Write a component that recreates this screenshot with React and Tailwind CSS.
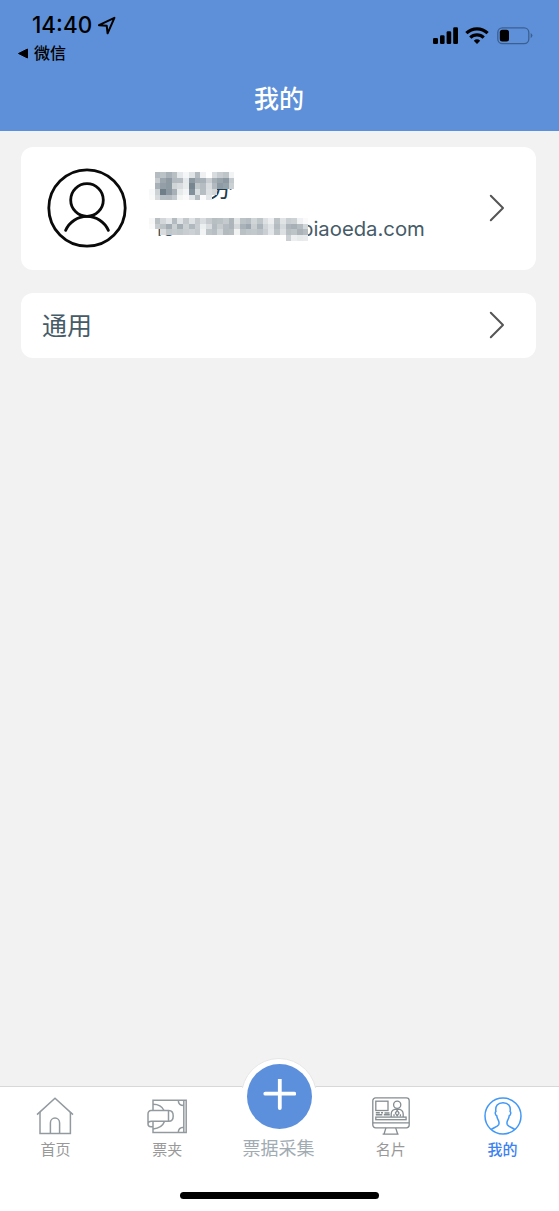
const NAME_MOSAIC = [
    ["", "#b4bcc1", "#bbc3c7", "#a8b1b7", "#b9c0c4", "#e5e8ea", "#f5f6f7", "#e0e4e6", "#b3bbc0", "#eef0f1", "", "#d8dcdf", "#c6ccd0", "#bec5c9", "#f1f3f4"],
    ["", "#c6ccd0", "#9ca6ad", "#8e99a1", "#b3bbc1", "#b5bdc2", "#e6e9eb", "#8d99a1", "#a4adb4", "#a8b1b7", "#c8ced2", "#a7b0b6", "#98a3aa", "#8d99a2", "#c3cacd"],
    ["", "#a8b1b8", "#939ea6", "#8d9aa2", "#cfd4d7", "#d8dcdf", "#e8ebec", "#76858f", "#c0c7cb", "#b5bdc2", "#d9dddf", "#b2bac0", "#8f9ba4", "#96a2a9", "#cbd0d3"],
    ["#f7f8f9", "#cdd2d5", "#6f7f89", "#8b98a1", "#a6b0b6", "#e7eaeb", "#f3f4f5", "#81909a", "#d9dee0", "#b6bec3", "#dce0e2", "#d2d7da", "", "", ""],
    ["#fafafa", "#d7dbde", "#b6bfc4", "#b5bdc2", "#c4cacf", "#f4f5f5", "#fafafa", "#e4e7e9", "#b5bdc2", "#fbfbfb", "#e3e6e8", "", "", "", ""],
];

const MAIL_MOSAIC = [
    ["#f7f7f7", "#b9c0c4", "#d3d7da", "#e3e6e8", "#b5bcc1", "#e0e3e5", "#c2c8cb", "#dfe2e4", "#c4cacd", "#d9dddf", "#c5cbce", "#b8bfc3", "#bbc2c6", "#c4cacd", "#aeb6bb", "#e2e5e6", "#bcc3c7", "#b6bec3", "#d0d5d7", "#bfc6ca", "#dee1e3", "#eceeef", "#bcc3c7", "#e0e4e5", "#c8ced1", "#cdd2d5", "#eff1f2", "#fafafa"],
    ["#fafafa", "#c6cccf", "#bcc3c7", "#a4adb3", "#cbd0d3", "#a5aeb4", "#cbd0d3", "#b1b9be", "#c7cdd0", "#ecefef", "#d9dddf", "#b4bcc1", "#c6cbce", "#b4bcc1", "#adb5ba", "#d4d8da", "#a9b2b8", "#9da7af", "#c9ced1", "#abb4ba", "#d0d5d7", "#e0e3e5", "#b4bcc1", "#d4d9db", "#aeb6bb", "#a7b0b6", "#b4bcc1", "#d3d8da"],
    ["", "", "#d8dcdf", "#c0c7ca", "#c5cbce", "#c1c8cc", "#c7cdd0", "#cbd1d4", "#c4cacd", "#f2f3f4", "#bec5c9", "#b8bfc4", "#d2d7d9", "#b3bbbf", "#b6bec2", "#f1f3f3", "#b9c1c5", "#c0c7cb", "#c2c9cc", "#bcc3c8", "#c9cfd2", "#e3e6e8", "#bcc4c8", "#dce0e2", "#b7bfc3", "#bdc4c8", "#abb3b9", "#b5bdc2"],
    ["", "", "", "", "", "", "", "", "", "", "", "", "", "", "", "", "", "", "", "", "", "", "", "", "#c9cfd2", "#eceeef", "#e7eaeb", "#e9ebec"],
];

function Mosaic({ rows }) {
    return (
        <div>
            {rows.map((row, y) => (
                <div key={y} className="flex h-[5.7px]">
                    {row.map((color, x) => (
                        <span key={x} className="h-full w-[5.7px] shrink-0" style={{ backgroundColor: color || undefined }} />
                    ))}
                </div>
            ))}
        </div>
    );
}

function LocationIcon() {
    return (
        <svg width="20" height="20" viewBox="0 0 20 20" fill="none" stroke="#000" strokeWidth="2" strokeLinejoin="round">
            <path d="M2 10.2 17.4 2.8 10.6 18.3 9.7 10.7Z" />
        </svg>
    );
}

function SignalIcon() {
    return (
        <svg width="26" height="18" viewBox="0 0 26 18">
            <rect x="0" y="11" width="5" height="6" rx="1.3" />
            <rect x="7" y="8.2" width="4.6" height="8.8" rx="1.3" />
            <rect x="13.6" y="4.3" width="4.6" height="12.7" rx="1.3" />
            <rect x="20.2" y="0.3" width="4.8" height="16.7" rx="1.3" />
        </svg>
    );
}

function WifiIcon() {
    return (
        <svg width="24" height="18" viewBox="0 0 24 18" fill="none" stroke="#000" strokeWidth="3.2">
            <path d="M1.4 6.2A15.2 15.2 0 0 1 22.6 6.2" />
            <path d="M5.3 10.6A9.6 9.6 0 0 1 18.7 10.6" />
            <path d="M8.8 13.7A5 5 0 0 1 15.2 13.7L12 17Z" fill="#000" stroke="none" />
        </svg>
    );
}

function BatteryIcon() {
    return (
        <svg width="37" height="18" viewBox="0 0 37 18">
            <rect x="0.8" y="0.8" width="31" height="15.8" rx="4.6" fill="none" stroke="#3c5f91" strokeWidth="1.3" />
            <rect x="2.8" y="2.8" width="9.2" height="11.8" rx="2.5" />
            <path d="M33.7 5.9Q37.2 8.6 33.7 11.3Z" fill="#3c5f91" />
        </svg>
    );
}

function Chevron() {
    return (
        <svg width="16" height="28" viewBox="0 0 16 28" fill="none" stroke="#555" strokeWidth="2" strokeLinecap="round" strokeLinejoin="round">
            <path d="M1.8 1.8 14 14 1.8 26.2" />
        </svg>
    );
}

function Avatar() {
    return (
        <svg width="80" height="80" viewBox="0 0 80 80" fill="none" stroke="#0a0a0a" strokeWidth="2.8" strokeLinecap="round">
            <circle cx="40" cy="40" r="38.2" />
            <circle cx="40" cy="32" r="16.3" />
            <path d="M18.6 62.4A23.4 23.4 0 0 1 61.4 62.4" />
        </svg>
    );
}

function HomeIcon() {
    return (
        <svg width="38" height="38" viewBox="0 0 38 38" fill="none" stroke="#939a9e" strokeWidth="1.5">
            <path d="M1 17.6 19 1.3 37 17.6" />
            <path d="M4 15v21.4h30.4V15" />
            <path d="M14.4 36.4V26a4.6 4.9 0 0 1 9.2 0v10.4" />
        </svg>
    );
}

function WalletIcon() {
    return (
        <svg width="40" height="38" viewBox="0 0 40 38" fill="none" stroke="#939a9e" strokeWidth="1.5">
            <path d="M6 13.3V3.3h33.2v32.2H6V24.2" />
            <path d="M36.8 3.3v32.2M31.3 3.3c0 3.4 2.2 5.3 5.5 5.3M31.3 35.5c0-3.4 2.2-5.3 5.5-5.3" />
            <path d="M6 7.2c5 0 9.4 2.6 11 6.3M17.6 24.2c-1.6 4.4-6 7.2-11.6 7.7" />
            <path d="M1 27V17c0-2.2 1.2-3.4 3-3.4h17.8c3 0 4.4 1.9 4.4 5.3s-1.4 5.3-4.4 5.3H4.5C2.4 24.2 1 25 1 27s1.2 2.7 2.9 2.7H6" />
            <path d="M21.5 13.6v10.6" />
        </svg>
    );
}

function CardIcon() {
    return (
        <svg width="38" height="38" viewBox="0 0 38 38" fill="none" stroke="#858c90" strokeWidth="1.3">
            <rect x="0.8" y="0.9" width="36.4" height="30" rx="2.8" />
            <path d="M0.8 25.9h36.4M13.9 30.9 12 37.2M23.7 30.9 25.7 37.2M10.6 37.2h16" />
            <rect x="3.8" y="4.2" width="12.2" height="9.3" />
            <circle cx="25.2" cy="7.8" r="3.6" />
            <path d="M19.2 20.1v-3c0-3.3 2.4-5 6-5s6 1.7 6 5v3M22 19.5v-2.2M28.4 19.5v-2.2M25.2 18.8l-1.8-2.7 1.8-2.6 1.8 2.6z" />
            <rect x="3.8" y="20.1" width="30.3" height="2.6" />
            <path d="M3.8 15.7h4M9 15.7h2M12.5 16.1h5M3.8 17.8h6.5M11.8 17.8h6" strokeWidth="1.5" />
        </svg>
    );
}

function MineIcon() {
    return (
        <svg width="38" height="38" viewBox="0 0 38 38" fill="none" stroke="#4298f7" strokeWidth="1.5">
            <circle cx="19" cy="19" r="18" />
            <path d="M7 32.8c1.8-2.2 6.6-2.8 7.7-5.2.8-1.9.1-3.8-.8-5.3-.8-1.3-1-2.3-1.2-3.6-1.4-.4-2-3.6-.8-4.2-.9-5.6 1.9-8.7 7.1-8.7s8 3.1 7.1 8.7c1.2.6.6 3.8-.8 4.2-.2 1.3-.4 2.3-1.2 3.6-.9 1.5-1.6 3.4-.8 5.3 1.1 2.4 5.9 3 7.7 5.2" />
        </svg>
    );
}

function Tab({ icon, label, active }) {
    return (
        <div className={`flex flex-1 flex-col items-center pt-[9.5px] ${active ? "font-medium text-[#3c82f0]" : "text-[#999]"}`}>
            {icon}
            <span className="mt-[7px] text-[15px] leading-4">{label}</span>
        </div>
    );
}

export default function App() {
    return (
        <div className="flex h-[1211px] w-[559px] flex-col overflow-hidden bg-[#f2f2f2] font-['Inter','Noto_Sans_CJK_SC',sans-serif]">
            {/* HEADER */}
            <header className="flex h-[131px] shrink-0 flex-col bg-[#5d90d9]">
                <div className="flex h-[70px] justify-between pr-[25px] pl-[17px] text-black">
                    <div className="pt-[13px]">
                        <div className="flex items-center pl-[15px]">
                            <span className="text-[22.5px] leading-6 font-medium">14:40</span>
                            <span className="ml-[5px]"><LocationIcon /></span>
                        </div>
                        <div className="mt-[6px] flex items-center gap-[5px] text-base leading-5 font-medium">
                            <svg width="12" height="11" viewBox="0 0 12 11"><path d="M1.5 5.5 10.5 1v9z" stroke="#000" strokeLinejoin="round" /></svg>
                            <span>微信</span>
                        </div>
                    </div>
                    <div className="flex items-start pt-[27px]">
                        <SignalIcon />
                        <span className="ml-[6px]"><WifiIcon /></span>
                        <span className="ml-2"><BatteryIcon /></span>
                    </div>
                </div>
                <h1 className="pt-[13px] pr-[1px] text-center text-[25px] leading-8 font-medium text-white">我的</h1>
            </header>

            {/* CONTENT */}
            <main className="flex flex-1 flex-col gap-[23px] pt-[15.5px] pr-[23px] pl-[21px]">
                <section className="flex h-[123px] items-center rounded-xl bg-white pr-[31px] pl-[26px]">
                    <Avatar />
                    <div className="ml-[22px] flex-1 self-stretch pt-[25.5px]">
                        <div className="relative h-[46px] pl-[59px] text-[25px] leading-8 text-[#233c4c]">
                            <span className="block [clip-path:inset(17px_0_0_0)]">芬</span>
                            <div className="absolute top-0 left-0"><Mosaic rows={NAME_MOSAIC} /></div>
                        </div>
                        <div className="relative flex h-6 pl-[5px] text-[20.3px] leading-[21px] text-[#465b68]">
                            <span className="w-[147px] [clip-path:inset(8px_0_0_0)]">16</span>
                            <span>piaoeda.com</span>
                            <div className="absolute top-0 left-0"><Mosaic rows={MAIL_MOSAIC} /></div>
                        </div>
                    </div>
                    <Chevron />
                </section>
                <section className="flex h-[65px] items-center justify-between rounded-xl bg-white pr-[31px] pl-[21px]">
                    <span className="pt-[2px] text-[25px] leading-8 text-[#465b68]">通用</span>
                    <Chevron />
                </section>
            </main>

            {/* TAB BAR */}
            <footer className="h-[125px] shrink-0 border-t-[1.5px] border-[#d8d8d8] bg-white">
                <nav className="mr-[0.5px] -ml-[0.5px] flex h-[109px]">
                    <Tab icon={<HomeIcon />} label="首页" />
                    <Tab icon={<WalletIcon />} label="票夹" />
                    <div className="relative flex flex-1 flex-col items-center pt-[52px]">
                        <div className="absolute -top-[29px] ml-[1px] h-[76px] w-[76px] rounded-full border border-[#e6e6e6] bg-white [clip-path:inset(0_0_46px_0)]" />
                        <div className="absolute -top-[23.5px] ml-[1px] flex h-[65px] w-[65px] items-center justify-center rounded-full bg-[#5d90dc]">
                            <svg width="34" height="34" viewBox="0 0 34 34" stroke="#fff" strokeWidth="3.8" strokeLinecap="round">
                                <path d="M17.8 0.5V29M3.3 14.7h29" />
                            </svg>
                        </div>
                        <span className="pr-[1px] text-lg leading-5 text-[#a1abb2]">票据采集</span>
                    </div>
                    <Tab icon={<CardIcon />} label="名片" />
                    <Tab icon={<MineIcon />} label="我的" active />
                </nav>
                <div className="mx-auto -mt-[4px] h-[7px] w-[199px] rounded-full bg-black" />
            </footer>
        </div>
    );
}
